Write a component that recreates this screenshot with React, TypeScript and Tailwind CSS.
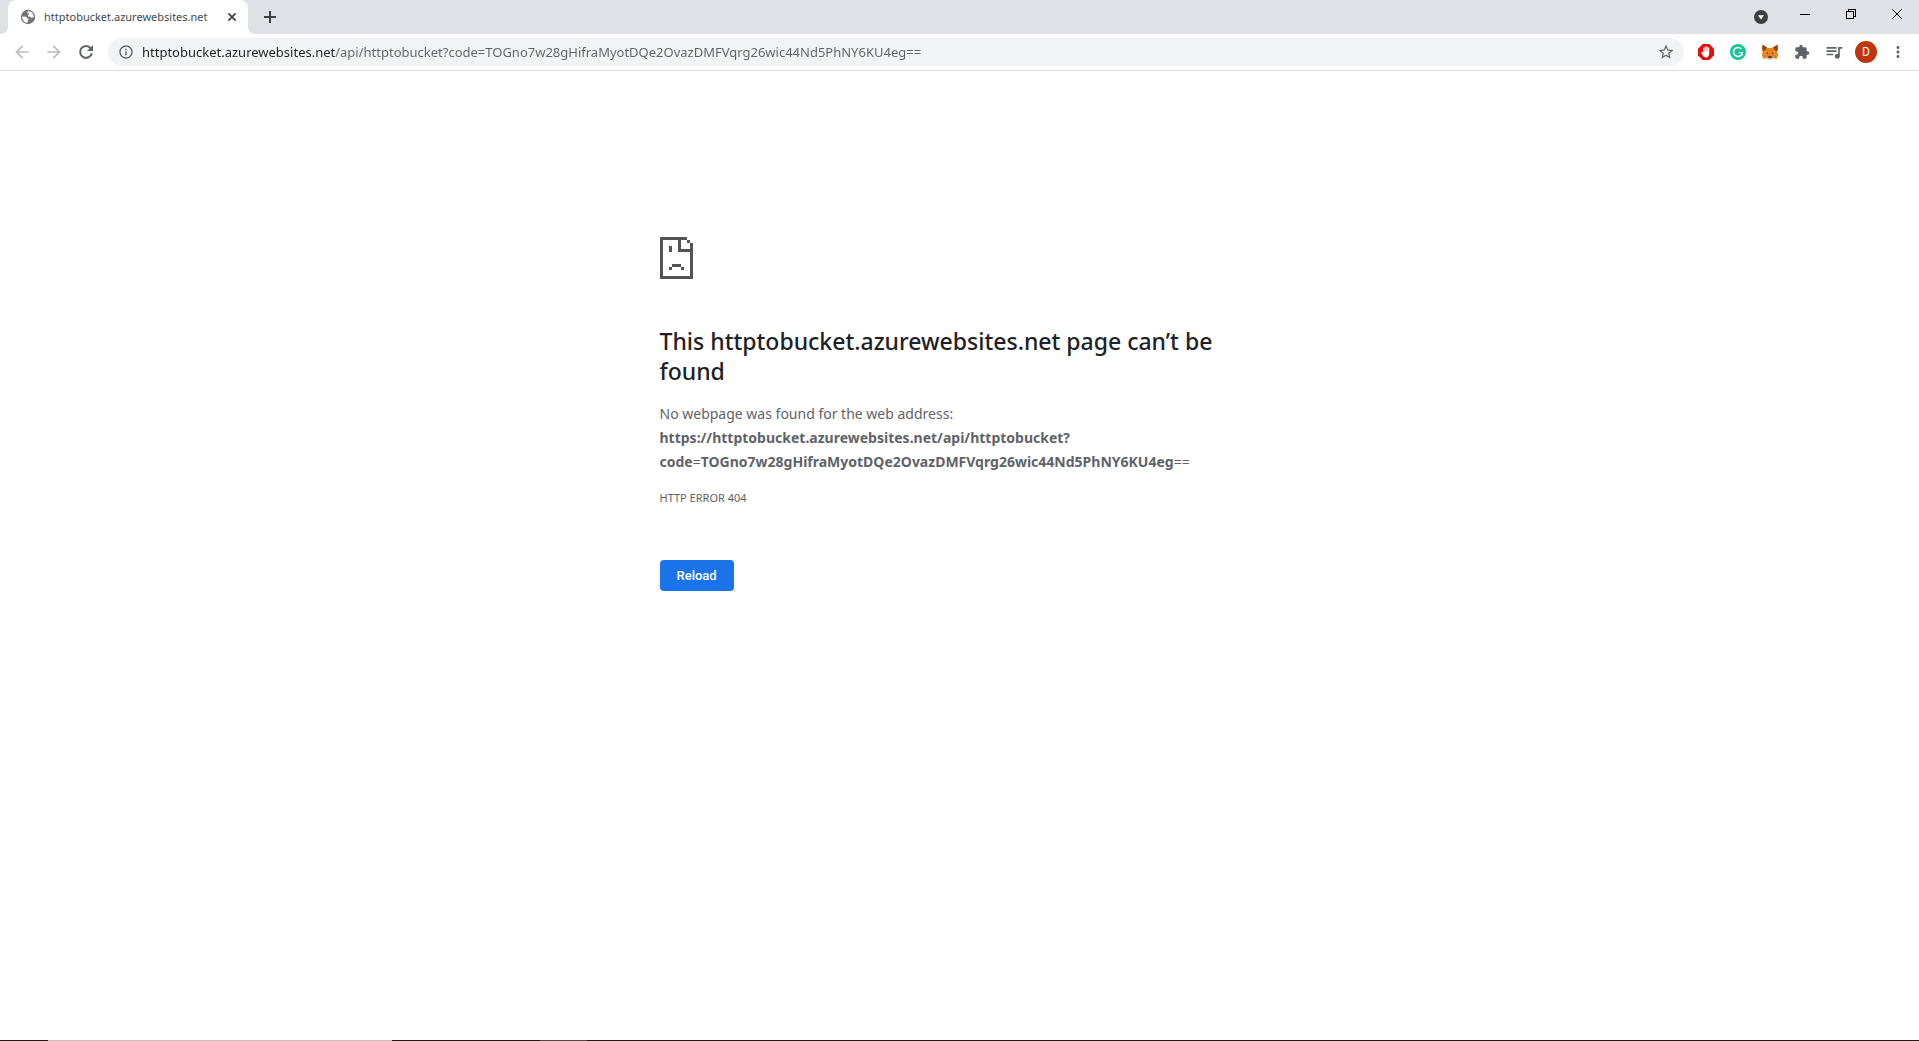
import { useState } from "react";
import type { ReactNode } from "react";
import { MdArrowBack, MdArrowForward, MdExtension, MdInfoOutline, MdMoreVert, MdOutlineStarBorder, MdQueueMusic } from "react-icons/md";

const HOST = "httptobucket.azurewebsites.net";
const KEY = "TOGno7w28gHifraMyotDQe2OvazDMFVqrg26wic44Nd5PhNY6KU4eg";

function ToolButton({ label, children, disabled }: { label: string; children: ReactNode; disabled?: boolean }) {
  return (
    <button
      type="button"
      aria-label={label}
      disabled={disabled}
      className="flex h-7 w-8 shrink-0 items-center justify-center text-[#5f6368] disabled:text-[#babcbe]"
    >
      {children}
    </button>
  );
}

function WindowButton({ label, children }: { label: string; children: ReactNode }) {
  return (
    <button type="button" aria-label={label} className="flex h-7 w-[46px] shrink-0 items-center justify-end pr-[17px] text-black">
      {children}
    </button>
  );
}

function GlobeIcon() {
  return (
    <svg viewBox="0 0 16 16" className="size-4 shrink-0">
      <circle cx="8" cy="8" r="7.2" fill="#757575" />
      <path d="M2 7.6L5 7.8C6.4 7.8 7.2 8.4 7.2 9.4L8.6 9.8C9.2 10.2 8.8 10.8 8 11L7.2 13.9C4.6 13.6 2.2 11.4 2 7.6Z" fill="#fff" />
      <path d="M8.4 2.2C11.6 2.2 13.8 4.8 13.9 8L12.4 8.4C11.6 9 10.8 8.8 10.4 7.8L8.2 7.4C7.6 6.8 8 6 8.8 5.8L9 4.4 7.4 4.2C7 3.4 7.6 2.6 8.4 2.2Z" fill="#fff" />
    </svg>
  );
}

function ReloadIcon() {
  return (
    <svg viewBox="0 0 16 16" className="size-4" fill="none">
      <path d="M12.7 4.3A5.9 5.9 0 1 0 13.8 9.3" stroke="currentColor" strokeWidth="2" />
      <path d="M15 1V7H9Z" fill="currentColor" />
    </svg>
  );
}

function TabStrip() {
  return (
    <div className="flex h-[34px] items-start bg-[#dee1e6] pl-2">
      <div className="relative flex h-full w-60 items-center rounded-t-lg bg-white pr-2 pl-3">
        <span className="absolute bottom-0 -left-2 size-2 bg-[radial-gradient(circle_at_0_0,#dee1e6_8px,#fff_8px)]" />
        <span className="absolute -right-2 bottom-0 size-2 bg-[radial-gradient(circle_at_100%_0,#dee1e6_8px,#fff_8px)]" />
        <GlobeIcon />
        <span className="ml-2 flex-1 truncate text-[11px] text-[#45494d]">{HOST}</span>
        <button type="button" aria-label="Close tab" className="flex size-4 items-center justify-center">
          <svg viewBox="0 0 8 8" className="size-2" stroke="#3c4043" strokeWidth="1.7" fill="none">
            <path d="M0.4 0.4L7.6 7.6M7.6 0.4L0.4 7.6" />
          </svg>
        </button>
      </div>
      <button type="button" aria-label="New tab" className="ml-2 flex h-[34px] w-7 items-center justify-center">
        <svg viewBox="0 0 12 12" className="size-3" stroke="#3c4043" strokeWidth="2" fill="none">
          <path d="M6 0V12M0 6H12" />
        </svg>
      </button>
      <div className="flex-1" />
      <button type="button" aria-label="Search tabs" className="mr-1 flex h-[34px] w-8 items-center justify-center">
        <svg viewBox="0 0 14 14" className="size-[14px]">
          <circle cx="7" cy="7" r="7" fill="#3c4043" />
          <path d="M4 5.2H10L7 9.4Z" fill="#fff" />
        </svg>
      </button>
      <WindowButton label="Minimize">
        <svg viewBox="0 0 10 10" className="size-[10px]" fill="currentColor" shapeRendering="crispEdges">
          <path d="M0 5H10V6H0Z" />
        </svg>
      </WindowButton>
      <WindowButton label="Restore">
        <svg viewBox="0 0 10 10" className="size-[10px]" fill="none" stroke="currentColor" shapeRendering="crispEdges">
          <path d="M0.5 2.5H7.5V9.5H0.5ZM2.5 2.5V0.5H9.5V7.5H7.5" />
        </svg>
      </WindowButton>
      <WindowButton label="Close">
        <svg viewBox="0 0 10 10" className="size-[10px]" fill="none" stroke="currentColor">
          <path d="M0.3 0.3L9.7 9.7M9.7 0.3L0.3 9.7" />
        </svg>
      </WindowButton>
    </div>
  );
}

function AdBlockIcon() {
  return (
    <svg viewBox="0 0 16 16" className="size-4">
      <path d="M4.7 0H11.3L16 4.7V11.3L11.3 16H4.7L0 11.3V4.7Z" fill="#e40d0d" />
      <path
        d="M5.1 8.2V4.4a.65.65 0 0 1 1.3 0V7h.3V3.2a.65.65 0 0 1 1.3 0V7h.3V3a.65.65 0 0 1 1.3 0v4h.3V4a.65.65 0 0 1 1.3 0v5.2c0 2.6-1.2 4.2-3.1 4.2-1.7 0-2.6-.8-3.4-2.1L3.2 9c-.4-.8.5-1.3 1.1-.8z"
        fill="#fff"
      />
    </svg>
  );
}

function GrammarlyIcon() {
  return (
    <svg viewBox="0 0 16 16" className="size-4" fill="none">
      <circle cx="8" cy="8" r="8" fill="#15c39a" />
      <path d="M11.4 5A4.5 4.5 0 1 0 12.4 8.9" stroke="#fff" strokeWidth="1.5" />
      <path d="M8.7 8.6H12.4V11.6" stroke="#fff" strokeWidth="1.4" />
    </svg>
  );
}

function FoxIcon() {
  return (
    <svg viewBox="0 0 16 16" className="size-4">
      <path d="M0.7 0.8L6 4H10L15.3 0.8L16 4.5L15.2 8L16 11L14.7 15L11.3 14L9.6 15.3H6.4L4.7 14L1.3 15L0 11L0.8 8L0 4.5Z" fill="#e8821e" />
      <path d="M0.7 0.8L5 3.6L3.4 6L1 7.4L0 4.5ZM15.3 0.8L11 3.6L12.6 6L15 7.4L16 4.5Z" fill="#8a4a1c" />
      <path d="M0.8 8L5 6.8L5.8 10.6L0 11ZM15.2 8L11 6.8L10.2 10.6L16 11Z" fill="#f08a24" />
      <path d="M3.9 8.9L5.8 8.4L6.1 10ZM12.1 8.9L10.2 8.4L9.9 10Z" fill="#233447" />
      <path d="M4.7 14L6.2 12.4H9.8L11.3 14L9.6 15.3H6.4Z" fill="#c9b5a4" />
      <path d="M6.4 12.3H9.6L9.9 13.8H6.1Z" fill="#20262e" />
    </svg>
  );
}

function Toolbar() {
  const [address, setAddress] = useState(`${HOST}/api/httptobucket?code=${KEY}==`);
  return (
    <div className="flex h-[37px] items-center border-b border-[#dadce0] bg-white pr-[5px] pl-[6px]">
      <ToolButton label="Back" disabled>
        <MdArrowBack className="size-5" />
      </ToolButton>
      <ToolButton label="Forward" disabled>
        <MdArrowForward className="size-5" />
      </ToolButton>
      <ToolButton label="Reload page">
        <ReloadIcon />
      </ToolButton>
      <div className="mx-[6px] flex h-7 flex-1 items-center rounded-full bg-[#f1f3f4] pr-[2px] pl-[10px]">
        <button type="button" aria-label="View site information" className="flex text-[#5f6368]">
          <MdInfoOutline className="size-4" />
        </button>
        <input
          type="text"
          aria-label="Address and search bar"
          spellCheck={false}
          value={address}
          onChange={(e) => setAddress(e.target.value)}
          className="ml-2 h-7 flex-1 bg-[linear-gradient(to_right,#202124_193px,#5f6368_193px)] bg-clip-text text-[13px] text-transparent caret-black outline-none"
        />
        <ToolButton label="Bookmark this tab">
          <MdOutlineStarBorder className="size-[18px]" />
        </ToolButton>
      </div>
      <ToolButton label="Ad blocker">
        <AdBlockIcon />
      </ToolButton>
      <ToolButton label="Writing assistant">
        <GrammarlyIcon />
      </ToolButton>
      <ToolButton label="Wallet">
        <FoxIcon />
      </ToolButton>
      <ToolButton label="Extensions">
        <MdExtension className="size-4" />
      </ToolButton>
      <ToolButton label="Media controls">
        <MdQueueMusic className="size-5" />
      </ToolButton>
      <ToolButton label="Profile">
        <span className="flex size-[22px] items-center justify-center rounded-full bg-[#bf360c] font-[Roboto] text-[12px] text-white">D</span>
      </ToolButton>
      <ToolButton label="Menu">
        <MdMoreVert className="size-[18px]" />
      </ToolButton>
    </div>
  );
}

function SadPageIcon() {
  return (
    <svg viewBox="0 0 11 14" className="h-[42px] w-[33px]" fill="#535353" shapeRendering="crispEdges">
      <path d="M0 0H9V1H7V4H10V2H11V14H0ZM1 1V13H10V5H6V1Z" fillRule="evenodd" />
      <path d="M9 1H10V2H9ZM3 3H4V5H3ZM4 9H7V10H4ZM3 10H4V11H3ZM7 10H8V11H7Z" />
    </svg>
  );
}

function ErrorPage() {
  return (
    <main className="mx-auto w-full max-w-[600px] flex-1 pt-[166px] text-[#5f6368]">
      <SadPageIcon />
      <h1 className="mt-[47px] text-[23px] leading-[30px] font-medium text-[#202124]">{`This ${HOST} page can’t be found`}</h1>
      <p className="mt-4 text-[14px] leading-6">
        No webpage was found for the web address:{" "}
        <strong className="block font-bold">
          {`https://${HOST}/api/httptobucket?`}
          <br />
          code<span className="font-normal">=</span>
          {KEY}
          <span className="font-normal">==</span>
        </strong>
      </p>
      <p className="mt-3 text-[11px] leading-6">HTTP ERROR 404</p>
      <button type="button" className="mt-[50px] flex h-[31px] items-center rounded bg-[#1a73e8] px-[17px] font-[Roboto] text-[13px] font-medium text-white">
        Reload
      </button>
    </main>
  );
}

export default function App() {
  return (
    <div className="flex min-h-screen flex-col bg-white font-['Noto_Sans','Open_Sans',sans-serif]">
      <header>
        <TabStrip />
        <Toolbar />
      </header>
      <ErrorPage />
      <footer className="flex h-px bg-[#1a1a1a]">
        <span className="w-12" />
        <span className="w-[344px] bg-[#c0c0c0]" />
        <span className="w-[148px]" />
        <span className="w-[47px] bg-[#4a4a4a]" />
      </footer>
    </div>
  );
}
